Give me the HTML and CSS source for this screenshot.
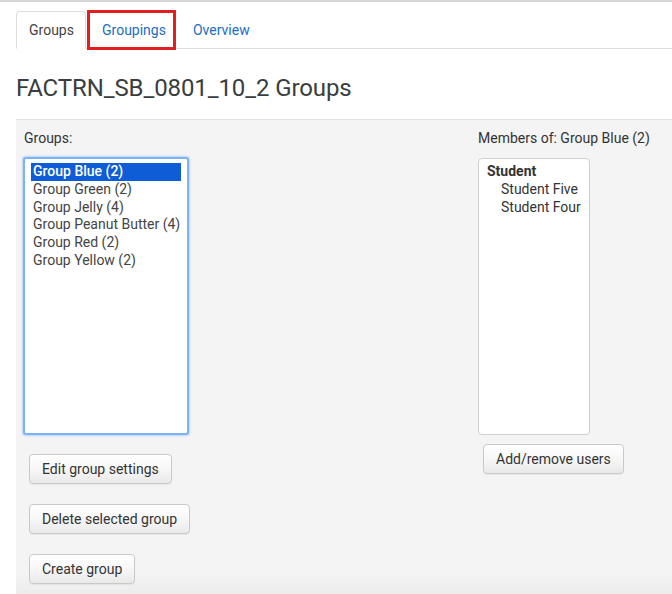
FILE: index.html
```html
<!DOCTYPE html>
<html>
<head>
<meta charset="utf-8">
<link rel="stylesheet" href="styles.css">
</head>
<body>
<div class="page">
  <ul class="tabs">
    <li class="tab active"><span>Groups</span></li>
    <li class="tab marked"><a href="#">Groupings</a></li>
    <li class="tab"><a href="#">Overview</a></li>
  </ul>
  <h2 class="title">FACTRN_SB_0801_10_2 Groups</h2>
  <div class="panel">
    <div class="col-left">
      <div class="label">Groups:</div>
      <div class="listbox">
        <div class="opt selected">Group Blue (2)</div>
        <div class="opt">Group Green (2)</div>
        <div class="opt">Group Jelly (4)</div>
        <div class="opt">Group Peanut Butter (4)</div>
        <div class="opt">Group Red (2)</div>
        <div class="opt">Group Yellow (2)</div>
      </div>
      <div class="buttons">
        <button class="btn">Edit group settings</button>
        <button class="btn">Delete selected group</button>
        <button class="btn">Create group</button>
      </div>
    </div>
    <div class="col-right">
      <div class="label">Members of: Group Blue (2)</div>
      <div class="members">
        <div class="role">Student</div>
        <div class="member">Student Five</div>
        <div class="member">Student Four</div>
      </div>
      <button class="btn btn-add">Add/remove users</button>
    </div>
  </div>
</div>
</body>
</html>
```
FILE: styles.css
```css
html, body {
  margin: 0;
  padding: 0;
  background: #fff;
}
body {
  font-family: Roboto, "Liberation Sans", sans-serif;
  font-size: 14px;
  color: #333;
  border-top: 2px solid #d6d6d6;
  height: 592px;
  overflow: hidden;
}
.page {
  padding-left: 16px;
}
.tabs {
  list-style: none;
  margin: 9px 0 0 0;
  padding: 0;
  display: flex;
  border-bottom: 1px solid #dedede;
  height: 37px;
}
.tab {
  display: flex;
  align-items: center;
  height: 37px;
  box-sizing: border-box;
}
.tab.active {
  padding: 0 12px;
  border: 1px solid #dedede;
  border-bottom-color: #fff;
  border-radius: 4px 4px 0 0;
  background: #fff;
  color: #444;
  height: 38px;
  width: 70px;
}
.tab a {
  color: #1b6ec2;
  text-decoration: none;
}
.tab.marked {
  border: 3px solid #e21e1e;
  height: 40px;
  margin-top: -1px;
  padding: 0 7px 0 12px;
  margin-left: 1px;
}
.tab:last-child {
  padding-left: 17px;
}
.title {
  margin: 0;
  padding: 24px 0 0 0;
  height: 46px;
  font-size: 24px;
  font-weight: 400;
  color: #3a3d40;
  line-height: 30px;
  letter-spacing: -0.1px;
}
.panel {
  border-top: 1px solid #e2e2e2;
  background: #f4f4f4;
  display: grid;
  grid-template-columns: 454px 1fr;
  padding: 8px 0 0 8px;
  height: 480px;
  background-image: linear-gradient(to bottom, #f4f4f4 0, #f4f4f4 452px, #ececec 475px);
}
.label {
  line-height: 20px;
  height: 20px;
  color: #333;
}
.listbox {
  margin: 9px 0 0 -1px;
  width: 166px;
  height: 278px;
  box-sizing: border-box;
  border: 2px solid #7db3f4;
  border-radius: 3px;
  box-shadow: 0 0 2px 1px #b9d6fa;
  background: #fff;
  padding: 4px 6px;
}
.opt {
  line-height: 17.8px;
  height: 17.8px;
  padding-left: 2px;
  color: #444;
  white-space: nowrap;
}
.opt.selected {
  background: #0e5dd6;
  color: #fff;
  font-weight: 500;
}
.buttons {
  display: flex;
  flex-direction: column;
  align-items: flex-start;
  gap: 20px;
  margin-top: 19px;
  padding-left: 5px;
}
.btn {
  font-family: Roboto, "Liberation Sans", sans-serif;
  font-size: 14px;
  color: #333;
  height: 30px;
  padding: 0 12px;
  border: 1px solid #c9c9c9;
  border-radius: 4px;
  background: linear-gradient(to bottom, #fff 0%, #f7f7f7 50%, #e9e9e9 100%);
  box-shadow: 0 1px 1px rgba(0,0,0,0.06);
  cursor: pointer;
}
.members {
  margin-top: 10px;
  width: 112px;
  height: 277px;
  box-sizing: border-box;
  border: 1px solid #cfcfcf;
  border-radius: 4px;
  background: #fff;
  padding: 3px 0 0 8px;
}
.role {
  font-weight: 700;
  line-height: 18px;
  color: #333;
}
.member {
  line-height: 18px;
  padding-left: 14px;
  color: #333;
}
.btn-add {
  margin: 9px 0 0 5px;
  height: 30px;
}
```
